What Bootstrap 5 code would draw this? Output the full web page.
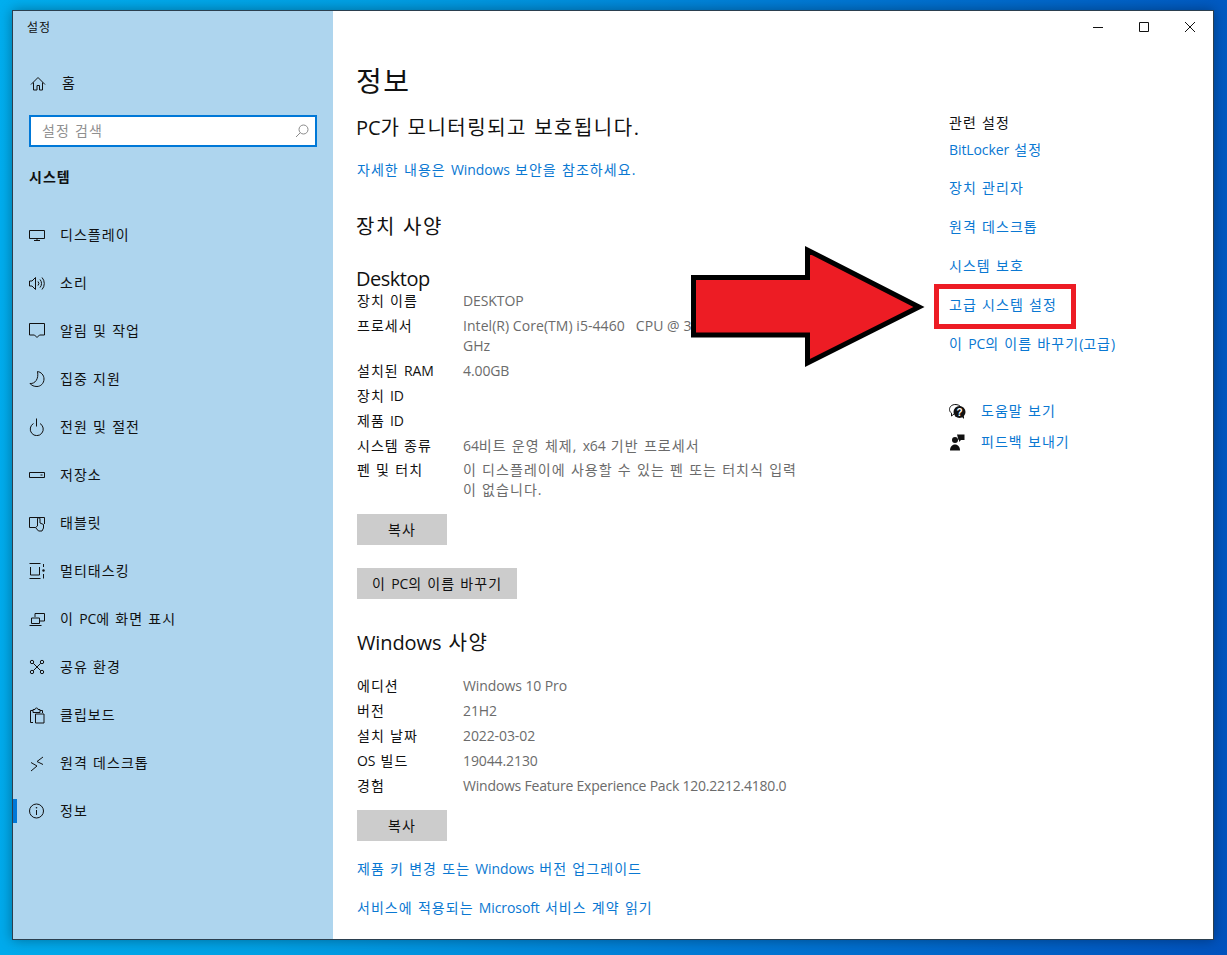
<!DOCTYPE html>
<html lang="ko">
<head>
<meta charset="utf-8">
<title>설정</title>
<link href="https://cdn.jsdelivr.net/npm/bootstrap@5.3.0/dist/css/bootstrap.min.css" rel="stylesheet">
<style>
html,body{height:100%}
body{margin:0;overflow:hidden;font-family:"Open Sans","Noto Sans CJK KR",sans-serif;font-size:14px;line-height:20px;color:#111;letter-spacing:1.05px;word-spacing:.5px;
  background:linear-gradient(96deg,#00aeef 0%,#00a0e4 28%,#0078d4 62%,#0052bd 100%);padding:10px 13px 15px 12px}
.lat{letter-spacing:-.1px;word-spacing:0}
.lat-tight{letter-spacing:-.21px;word-spacing:0}
.lat-cpu{letter-spacing:.05px;word-spacing:0}
.desk-win{height:930px;border:1px solid #2b3f4f;background:#fff;box-shadow:0 0 12px rgba(0,0,0,.35)}
.side-pane{width:320px;background:#aed5ee;flex:none}
.side-title{height:32px;line-height:34px;padding-left:14px;font-size:12px}
.side-item{height:48px;padding:0 0 0 16px;color:#111;gap:13px;position:relative}
.side-item:hover,.side-item:focus{color:#111}
.side-item.is-on::before{content:"";position:absolute;left:0;top:12px;width:4px;height:24px;background:#0078d7}
.side-item svg,.help-row svg{flex:none}
.line-ic{fill:none;stroke:#111;stroke-width:1}
.side-search{margin:8px 16px 0;height:32px}
.side-search .form-control{height:32px;border:2px solid #0078d7;border-radius:0;font-size:14px;line-height:20px;padding:2px 30px 4px 11px;box-shadow:none;color:#111;letter-spacing:inherit;word-spacing:inherit}
.side-search .form-control::placeholder{color:#8f8f8f}
.side-search svg{position:absolute;right:8px;top:9px}
.side-head{margin:20px 0 24px 16px;font-weight:700}
.main-col{width:616px;flex:none;padding:49px 0 0 23px}
.page-h{font-size:28px;line-height:42px;height:40px;margin:0;font-weight:400;letter-spacing:1.500px}
.sub-h{font-size:20px;line-height:30px;height:28px;font-weight:400;margin:0;letter-spacing:1.500px;word-spacing:.500px}
.sub-h.plain{line-height:24px;height:24px;letter-spacing:-.5px}
.lnk{color:#0a78d2;text-decoration:none;display:block}
.lnk:hover{color:#0a78d2}
.spec-wrap{padding-left:1px}
.spec-row{display:flex;margin-bottom:5px}
.spec-row.wrap-a{margin-bottom:4px}
.spec-row.wrap-b .spec-v{line-height:19.500px}
.spec-k{width:106px;flex:none}
.spec-v{width:345px;color:#6b6b6b}
.gray-btn{display:block;height:31px;padding:0 15px;background:#ccc;border:0;border-radius:0;font-size:14px;line-height:31px;color:#111;letter-spacing:inherit;word-spacing:inherit}
.gray-btn:hover{background:#ccc;color:#111}
.w-90{width:90px;padding:0}
.win-ctl{height:32px}
.win-ctl span{width:46px;height:32px}
.right-col{flex:1 1 auto}
.right-top{line-height:22px;height:20px}
.mark-layer{position:absolute;left:0;top:0;pointer-events:none}
</style>
</head>
<body>
<div class="desk-win d-flex overflow-hidden">
  <aside class="side-pane d-flex flex-column">
    <div class="side-title">설정</div>
    <a class="nav-link side-item d-flex align-items-center" href="#" style="margin-top:16px;gap:15px">
      <svg class="line-ic" width="18" height="18" viewBox="0 0 18 18"><path d="M2 10.500 9 3.500l7 7M4.500 8.500v7.500h3.500v-4.500h2.500V16h3V8.500"/></svg><span>홈</span></a>
    <div class="side-search position-relative">
      <input class="form-control" type="text" placeholder="설정 검색" aria-label="설정 검색">
      <svg width="14" height="14" viewBox="0 0 14 14" fill="none" stroke="#8a8a8a"><circle cx="8.500" cy="5.500" r="4.500"/><path d="M5.300 8.700 1 13"/></svg>
    </div>
    <div class="side-head">시스템</div>
    <nav class="nav flex-column">
      <a class="nav-link side-item d-flex align-items-center" href="#"><svg class="line-ic" width="18" height="18" viewBox="0 0 18 18"><path d="M.5 4.500h15v8H.5zM8 12.500v2M5 14.500h6"/></svg><span>디스플레이</span></a>
      <a class="nav-link side-item d-flex align-items-center" href="#"><svg class="line-ic" width="18" height="18" viewBox="0 0 18 18"><path d="M.5 7v5h2.500l3.500 3.500V3.500L3 7zM9 7.500a3 3 0 0 1 0 4M11 5.500a6 6 0 0 1 0 8M13 3.500a9 9 0 0 1 0 12"/></svg><span>소리</span></a>
      <a class="nav-link side-item d-flex align-items-center" href="#"><svg class="line-ic" width="18" height="18" viewBox="0 0 18 18"><path d="M.5 1.500h15V13H10.500L8 15.500 5.500 13H.5z"/></svg><span>알림 및 작업</span></a>
      <a class="nav-link side-item d-flex align-items-center" href="#"><svg class="line-ic" width="18" height="18" viewBox="0 0 18 18"><path d="M8.500 1.500C12 2 15 5 15 9c0 4.500-3.500 7.500-7 7.500-3 0-5.500-1-7-3 5 .5 9-4.500 7.500-12z"/></svg><span>집중 지원</span></a>
      <a class="nav-link side-item d-flex align-items-center" href="#"><svg class="line-ic" width="18" height="18" viewBox="0 0 18 18"><path d="M4.500 5.500a6.500 6.500 0 1 0 6.500 0M7.500.500v8"/></svg><span>전원 및 절전</span></a>
      <a class="nav-link side-item d-flex align-items-center" href="#"><svg class="line-ic" width="18" height="18" viewBox="0 0 18 18"><path d="M.5 6.500h15v5H.5z"/><path d="M11.500 9h2" /></svg><span>저장소</span></a>
      <a class="nav-link side-item d-flex align-items-center" href="#"><svg class="line-ic" width="18" height="18" viewBox="0 0 18 18"><path d="M6.500 13.500H.5v-10h15V10"/><path d="M8.500 12V5a1.250 1.250 0 0 1 2.500 0v4l3.500 1.500V14L13 17H9.500l-3-3.500z"/></svg><span>태블릿</span></a>
      <a class="nav-link side-item d-flex align-items-center" href="#"><svg class="line-ic" width="18" height="18" viewBox="0 0 18 18"><path d="M.5 1.500h11M1.500 5v8h9V5M.5 16.500h11M14.500 2v3M14.500 12v4.500"/><circle cx="14.500" cy="8.500" r="1.200" fill="#111" stroke="none"/></svg><span>멀티태스킹</span></a>
      <a class="nav-link side-item d-flex align-items-center" href="#"><svg class="line-ic" width="18" height="18" viewBox="0 0 18 18"><path d="M6 7V3.500h9.500V11H11M2.500 8H10.500V13.500H2.500zM.5 15.500h12"/></svg><span>이 <span class="lat">PC</span>에 화면 표시</span></a>
      <a class="nav-link side-item d-flex align-items-center" href="#"><svg class="line-ic" width="18" height="18" viewBox="0 0 18 18"><circle cx="3" cy="4" r="1.700"/><circle cx="13" cy="4" r="1.700"/><circle cx="3" cy="14" r="1.700"/><circle cx="13" cy="14" r="1.700"/><path d="M4.300 5.300l7.400 7.400M11.700 5.300l-7.400 7.400"/></svg><span>공유 환경</span></a>
      <a class="nav-link side-item d-flex align-items-center" href="#"><svg class="line-ic" width="18" height="18" viewBox="0 0 18 18"><path d="M4 16.500H1.500V4.500H4M11 4.500h2.500V7M4 6.500h7V3.500H9a1.500 1.500 0 0 0-3 0H4zM6.500 8h8.500v9H6.500z"/></svg><span>클립보드</span></a>
      <a class="nav-link side-item d-flex align-items-center" href="#"><svg class="line-ic" width="18" height="18" viewBox="0 0 18 18"><path d="M2 8.500l6 3.500-6 5M14 3 8 7.500l6 3"/></svg><span>원격 데스크톱</span></a>
      <a class="nav-link side-item is-on d-flex align-items-center" href="#"><svg class="line-ic" width="18" height="18" viewBox="0 0 18 18"><circle cx="7.500" cy="9" r="7"/><path d="M7.500 8v5"/><circle cx="7.500" cy="5.800" r=".8" fill="#111" stroke="none"/></svg><span>정보</span></a>
    </nav>
  </aside>

  <main class="main-col">
    <h1 class="page-h">정보</h1>
    <div class="sub-h" style="margin-top:13px"><span class="lat">PC</span>가 모니터링되고 보호됩니다.</div>
    <a class="lnk spec-wrap" href="#" style="margin-top:19px">자세한 내용은 <span class="lat">Windows</span> 보안을 참조하세요.</a>
    <h2 class="sub-h" style="margin-top:32px">장치 사양</h2>
    <div class="sub-h plain" style="margin-top:27px">Desktop</div>
    <div class="spec-wrap">
      <div class="spec-row"><div class="spec-k">장치 이름</div><div class="spec-v lat">DESKTOP</div></div>
      <div class="spec-row"><div class="spec-k">프로세서</div><div class="spec-v lat-cpu">Intel(R) Core(TM) i5-4460 &nbsp;&nbsp;CPU @ 3.20<br>GHz</div></div>
      <div class="spec-row"><div class="spec-k">설치된 <span class="lat">RAM</span></div><div class="spec-v lat">4.00GB</div></div>
      <div class="spec-row"><div class="spec-k">장치 <span class="lat">ID</span></div><div class="spec-v"></div></div>
      <div class="spec-row"><div class="spec-k">제품 <span class="lat">ID</span></div><div class="spec-v"></div></div>
      <div class="spec-row wrap-a"><div class="spec-k">시스템 종류</div><div class="spec-v"><span class="lat">64</span>비트 운영 체제, <span class="lat">x64</span> 기반 프로세서</div></div>
      <div class="spec-row wrap-b"><div class="spec-k">펜 및 터치</div><div class="spec-v">이 디스플레이에 사용할 수 있는 펜 또는 터치식 입력<br>이 없습니다.</div></div>
      <button class="btn gray-btn w-90" type="button" style="margin-top:15px">복사</button>
      <button class="btn gray-btn" type="button" style="margin-top:23px">이 <span class="lat">PC</span>의 이름 바꾸기</button>
    </div>
    <h2 class="sub-h spec-wrap" style="margin-top:29px"><span class="lat">Windows</span> 사양</h2>
    <div class="spec-wrap" style="margin-top:20px">
      <div class="spec-row"><div class="spec-k">에디션</div><div class="spec-v lat">Windows 10 Pro</div></div>
      <div class="spec-row"><div class="spec-k">버전</div><div class="spec-v lat">21H2</div></div>
      <div class="spec-row"><div class="spec-k">설치 날짜</div><div class="spec-v lat">2022-03-02</div></div>
      <div class="spec-row"><div class="spec-k"><span class="lat">OS</span> 빌드</div><div class="spec-v lat">19044.2130</div></div>
      <div class="spec-row"><div class="spec-k">경험</div><div class="spec-v lat-tight text-nowrap">Windows Feature Experience Pack 120.2212.4180.0</div></div>
      <button class="btn gray-btn w-90" type="button" style="margin-top:14px">복사</button>
    </div>
    <a class="lnk spec-wrap" href="#" style="margin-top:18px">제품 키 변경 또는 <span class="lat">Windows</span> 버전 업그레이드</a>
    <a class="lnk spec-wrap" href="#" style="margin-top:19px">서비스에 적용되는 <span class="lat">Microsoft</span> 서비스 계약 읽기</a>
  </main>

  <section class="right-col">
    <div class="win-ctl d-flex justify-content-end">
      <span class="d-flex align-items-center justify-content-center"><svg width="10" height="10" viewBox="0 0 10 10" stroke="#111" fill="none"><path d="M0 5.500h10"/></svg></span>
      <span class="d-flex align-items-center justify-content-center"><svg width="10" height="10" viewBox="0 0 10 10" stroke="#111" fill="none"><path d="M.5.500h9v9h-9z"/></svg></span>
      <span class="d-flex align-items-center justify-content-center"><svg width="10" height="10" viewBox="0 0 10 10" stroke="#111" fill="none"><path d="M0 0l10 10M10 0 0 10"/></svg></span>
    </div>
    <div class="right-top" style="margin-top:69px">관련 설정</div>
    <a class="lnk right-top" href="#" style="margin-top:7px"><span class="lat">BitLocker</span> 설정</a>
    <a class="lnk" href="#" style="margin-top:19px">장치 관리자</a>
    <a class="lnk" href="#" style="margin-top:19px">원격 데스크톱</a>
    <a class="lnk" href="#" style="margin-top:19px">시스템 보호</a>
    <a class="lnk" href="#" style="margin-top:19px">고급 시스템 설정</a>
    <a class="lnk" href="#" style="margin-top:19px">이 <span class="lat">PC</span>의 이름 바꾸기<span class="lat">(</span>고급<span class="lat">)</span></a>
    <a class="lnk help-row d-flex align-items-center" href="#" style="margin-top:47px;gap:15px">
      <svg width="17" height="17" viewBox="0 0 17 17"><path d="M6.500 1.500C3 1.500.5 3.500.5 6.500c0 1.500.8 2.800 2 3.600V13l2.500-2" fill="none" stroke="#111"/><path d="M6 1.500c3 0 5 1 6 3" fill="none" stroke="#111"/><circle cx="10.500" cy="9" r="6" fill="#111"/><path d="M13 14l2 2v-3" fill="#111"/><text x="10.500" y="12.500" text-anchor="middle" font-size="10" font-weight="700" fill="#fff" font-family="Liberation Sans,sans-serif" letter-spacing="0">?</text></svg><span>도움말 보기</span></a>
    <a class="lnk help-row d-flex align-items-center" href="#" style="margin-top:11px;gap:15px">
      <svg width="17" height="17" viewBox="0 0 17 17" fill="#111"><circle cx="6" cy="6" r="3"/><path d="M1 16.500c0-3.500 2-6 5-6s5 2.500 5 6z"/><path d="M8 .5h7.500v5.500H12l-2 2V6H9.500z"/></svg><span>피드백 보내기</span></a>
  </section>
</div>

<svg class="mark-layer" width="1227" height="955" viewBox="0 0 1227 955">
  <path d="M693.500 277.500H807.500V250L919 307 807.500 363V335H693.500z" fill="#ed1c24" stroke="#000" stroke-width="5"/>
  <rect x="936.500" y="286.500" width="137" height="40" fill="none" stroke="#ed1c24" stroke-width="5"/>
</svg>
<script src="https://cdn.jsdelivr.net/npm/bootstrap@5.3.0/dist/js/bootstrap.bundle.min.js"></script>
</body>
</html>
